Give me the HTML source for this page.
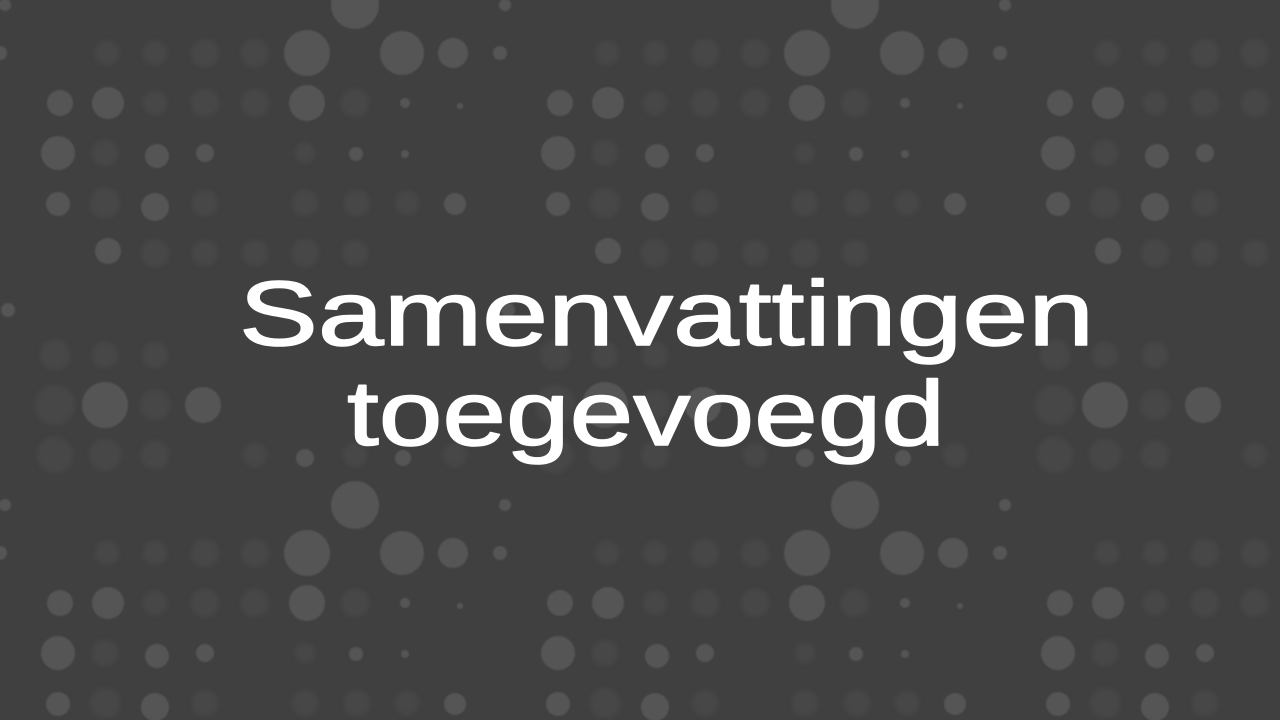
<!DOCTYPE html>
<html><head><meta charset="utf-8"><style>
html,body{margin:0;padding:0;width:1280px;height:720px;overflow:hidden;background:#404040}
</style></head><body>
<svg width="1280" height="720" viewBox="0 0 1280 720" xmlns="http://www.w3.org/2000/svg">
<defs>
<filter id="b" x="-50%" y="-50%" width="200%" height="200%"><feGaussianBlur stdDeviation="0.8"/></filter>
<filter id="bb" x="-50%" y="-50%" width="200%" height="200%"><feGaussianBlur stdDeviation="2.5"/></filter>
<pattern id="p" x="0" y="0" width="500" height="500" patternUnits="userSpaceOnUse">
<rect width="500" height="500" fill="#404040"/>
<g fill="#464646" filter="url(#bb)">
<circle cx="107" cy="53" r="12"/><circle cx="155" cy="53" r="12"/><circle cx="205" cy="53" r="14"/><circle cx="255" cy="53" r="14"/>
<circle cx="155" cy="103" r="12"/><circle cx="205" cy="103" r="14"/><circle cx="255" cy="103" r="14"/><circle cx="355" cy="103" r="14"/>
<circle cx="105" cy="153" r="13"/><circle cx="305" cy="153" r="10"/><circle cx="105" cy="203" r="15"/><circle cx="205" cy="203" r="13"/>
<circle cx="305" cy="203" r="13"/><circle cx="357" cy="203" r="13"/><circle cx="407" cy="203" r="12"/><circle cx="155" cy="253" r="14"/>
<circle cx="205" cy="253" r="13"/><circle cx="255" cy="253" r="13"/><circle cx="305" cy="253" r="14"/><circle cx="355" cy="253" r="13"/>
<circle cx="55" cy="355" r="15"/><circle cx="105" cy="355" r="13"/><circle cx="155" cy="355" r="13"/><circle cx="55" cy="405" r="20"/>
<circle cx="155" cy="405" r="15"/><circle cx="55" cy="455" r="18"/><circle cx="105" cy="455" r="16"/><circle cx="155" cy="455" r="14"/><circle cx="255" cy="455" r="12"/><circle cx="355" cy="455" r="12"/><circle cx="455" cy="455" r="12"/>
</g>
<g fill="#555" filter="url(#b)">
<circle cx="5" cy="5" r="6"/><circle cx="355" cy="5" r="24"/><circle cx="505" cy="5" r="6"/>
<circle cx="307" cy="53" r="23"/><circle cx="402" cy="53" r="22"/><circle cx="453" cy="53" r="15"/><circle cx="0" cy="53" r="7"/><circle cx="500" cy="53" r="7"/>
<circle cx="60" cy="103" r="13"/><circle cx="108" cy="103" r="16"/><circle cx="307" cy="103" r="18"/><circle cx="405" cy="103" r="5"/><circle cx="460" cy="106" r="3"/>
<circle cx="58" cy="153" r="17"/><circle cx="157" cy="156" r="12"/><circle cx="205" cy="153" r="9"/><circle cx="356" cy="154" r="7"/><circle cx="405" cy="154" r="4"/>
<circle cx="58" cy="204" r="12"/><circle cx="155" cy="207" r="14"/><circle cx="455" cy="204" r="11"/>
<circle cx="108" cy="251" r="13"/>
<circle cx="8" cy="310" r="7"/><circle cx="508" cy="310" r="7"/>
<circle cx="105" cy="405" r="23"/><circle cx="203" cy="405" r="18"/>
<circle cx="305" cy="458" r="9"/><circle cx="403" cy="458" r="8"/>
<circle cx="355" cy="505" r="24"/><circle cx="5" cy="505" r="6"/><circle cx="355" cy="-495" r="24"/>
</g>
</pattern>
</defs>
<rect width="1280" height="720" fill="url(#p)"/>
<g font-family="'Comic Sans MS','Liberation Sans',sans-serif" font-size="92" fill="#fff" stroke="#fff" stroke-width="1.5" stroke-linejoin="round">
<text x="239" y="345" textLength="855" lengthAdjust="spacingAndGlyphs">Samenvattingen</text>
<text x="347" y="445" textLength="598" lengthAdjust="spacingAndGlyphs">toegevoegd</text>
</g>
</svg>
</body></html>
